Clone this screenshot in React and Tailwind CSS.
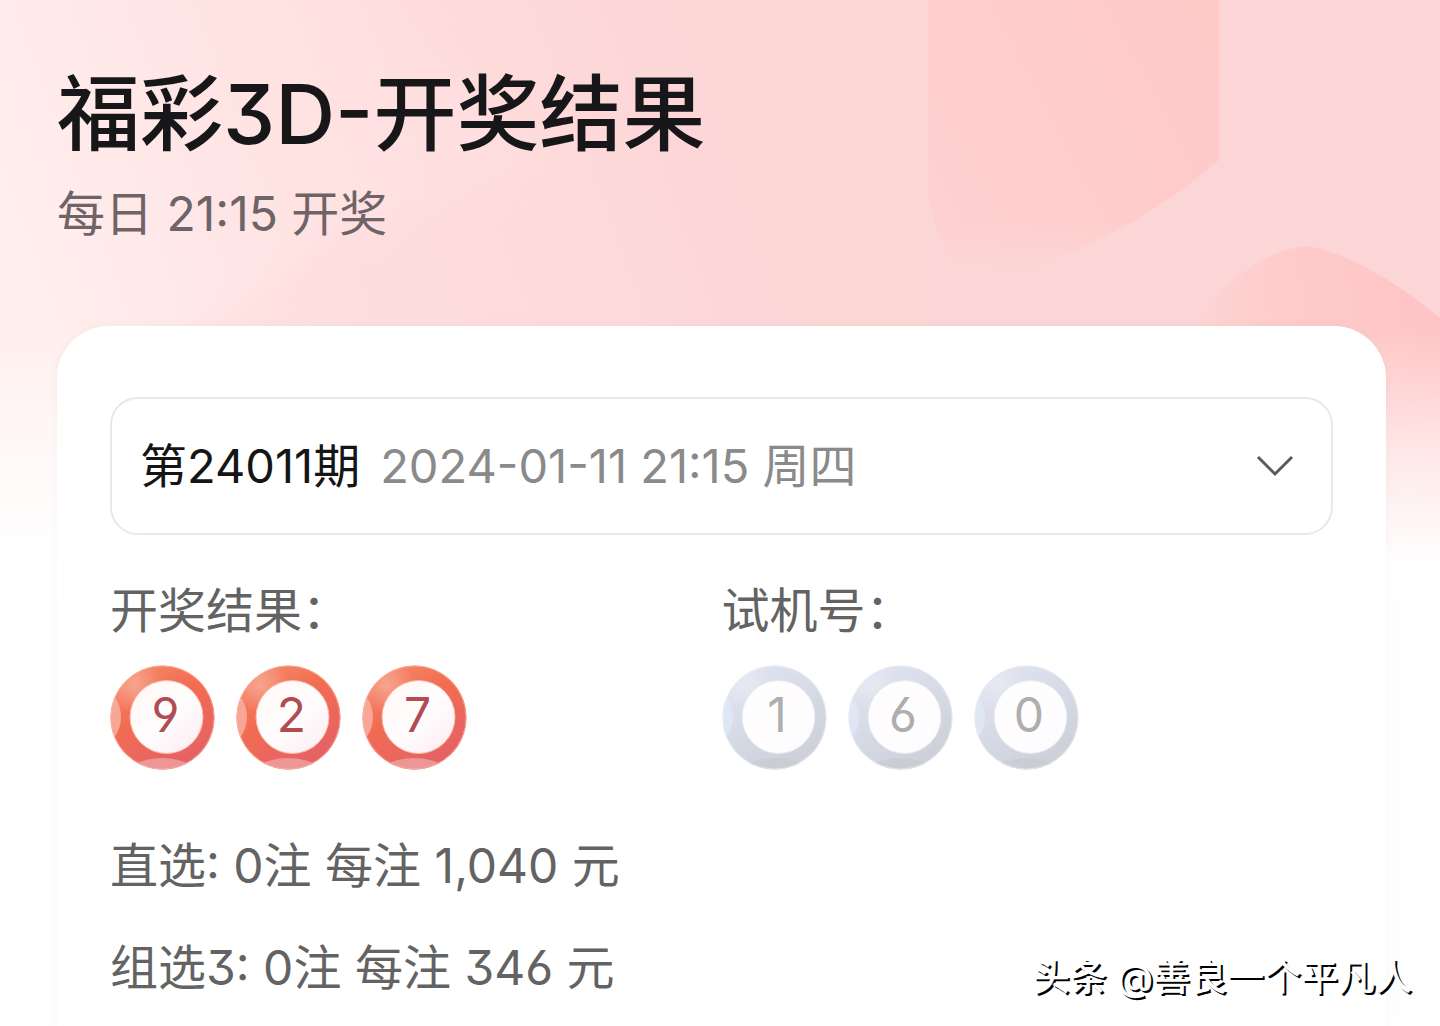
import { useId } from "react";

const DRAWS = [
  {
    issue: "第24011期",
    time: "2024-01-11 21:15 周四",
    result: [9, 2, 7],
    trial: [1, 6, 0],
    prizes: ["直选: 0注 每注 1,040 元", "组选3: 0注 每注 346 元"],
  },
];

function Backdrop() {
  return (
    <svg
      className="absolute inset-x-0 top-0 -z-10 h-[600px] w-full"
      viewBox="0 0 1440 600"
      preserveAspectRatio="none"
      aria-hidden="true"
    >
      <defs>
        <linearGradient id="base" gradientUnits="userSpaceOnUse" x1="0" y1="260" x2="700" y2="0">
          <stop offset="0" stopColor="#ffefee" />
          <stop offset="0.4" stopColor="#ffe3e3" />
          <stop offset="1" stopColor="#fed8d8" />
        </linearGradient>
        <linearGradient id="facet" gradientUnits="userSpaceOnUse" x1="920" y1="200" x2="1220" y2="40">
          <stop offset="0" stopColor="#fed0d1" />
          <stop offset="1" stopColor="#ffc9c8" />
        </linearGradient>
        <linearGradient id="facetTip" x1="0" y1="0" x2="0" y2="1">
          <stop offset="0.65" stopColor="#fff" />
          <stop offset="0.8" stopColor="#000" />
        </linearGradient>
        <mask id="tip" maskUnits="userSpaceOnUse" x="900" y="0" width="340" height="342">
          <rect x="900" width="340" height="342" fill="url(#facetTip)" />
        </mask>
        <linearGradient id="corner" gradientUnits="userSpaceOnUse" x1="1200" y1="330" x2="1420" y2="300">
          <stop offset="0" stopColor="#fcd4d4" />
          <stop offset="0.4" stopColor="#ffcbcb" />
          <stop offset="1" stopColor="#ffc5c6" />
        </linearGradient>
        <linearGradient id="fade" x1="0" y1="0" x2="0" y2="1">
          <stop offset="0.55" stopColor="#fff" stopOpacity="0" />
          <stop offset="0.76" stopColor="#fff" stopOpacity="0.6" />
          <stop offset="0.94" stopColor="#fff" stopOpacity="1" />
        </linearGradient>
        <filter id="soft" x="-20%" y="-20%" width="140%" height="140%">
          <feGaussianBlur stdDeviation="14" />
        </filter>
      </defs>
      <rect width="1440" height="600" fill="url(#base)" />
      <path
        d="M370 -40H960V400H90L330 240L560 160Q450 90 370 -40Z"
        fill="#fdd2d4"
        opacity="0.25"
        filter="url(#soft)"
      />
      <rect x="928" width="512" height="600" fill="#fcd6d6" />
      <path
        d="M928 0H1219V160Q1150 220 1060 258Q1000 280 978 310Q960 280 950 255Q928 215 928 190Z"
        fill="url(#facet)"
        mask="url(#tip)"
      />
      <path d="M1180 345Q1240 250 1310 246Q1370 260 1440 318V600H1180Z" fill="url(#corner)" />
      <rect width="1440" height="600" fill="url(#fade)" />
    </svg>
  );
}

function Ball({ number, red }) {
  const id = useId();

  return (
    <li className="relative flex size-[105px] items-center justify-center">
      <svg className="absolute inset-0 size-full" viewBox="0 0 105 105" aria-hidden="true">
        <defs>
          <linearGradient id={`${id}body`} x1="0.2" y1="0" x2="0.8" y2="1">
            <stop offset="0" stopColor={red ? "#f58a6a" : "#e0e3f0"} />
            <stop offset="0.4" stopColor={red ? "#f26c52" : "#d8dce8"} />
            <stop offset="1" stopColor={red ? "#e26068" : "#cbced6"} />
          </linearGradient>
          <radialGradient id={`${id}shine`} cx="0.24" cy="0.2" r="0.26">
            <stop offset="0" stopColor="#fff" stopOpacity="0.3" />
            <stop offset="1" stopColor="#fff" stopOpacity="0" />
          </radialGradient>
          <linearGradient id={`${id}face`} x1="0" y1="0" x2="1" y2="1">
            <stop offset="0" stopColor={red ? "#fff6f3" : "#fdfdff"} />
            <stop offset="0.5" stopColor="#fffdfe" />
            <stop offset="1" stopColor={red ? "#fdebf1" : "#fbfcff"} />
          </linearGradient>
          <clipPath id={`${id}clip`}>
            <circle cx="52.5" cy="52.5" r="52" />
          </clipPath>
        </defs>
        <g clipPath={`url(#${id}clip)`}>
          <circle cx="52.5" cy="52.5" r="52.5" fill={`url(#${id}body)`} />
          <circle cx="52.5" cy="52.5" r="52.5" fill={`url(#${id}shine)`} />
          <ellipse cx="-12" cy="52" rx="23" ry="29" fill={red ? "#f8b3a6" : "#dfe8f6"} opacity="0.8" />
          <ellipse cx="52" cy="118" rx="42" ry="25" fill={red ? "#eda3a4" : "#c8ccd2"} opacity="0.8" />
        </g>
        <circle cx="52.5" cy="52.5" r="51.5" fill="none" stroke={red ? "#ffb59c" : "#eceef6"} opacity="0.7" />
        <circle cx="56.5" cy="52" r="36.5" fill={`url(#${id}face)`} stroke={red ? "#fbb8a4" : "#e6e8f1"} />
      </svg>
      <span className={red ? "relative pb-1.5 pl-1.5 text-[#b14c53]" : "relative pb-1.5 pl-1.5 text-[#aeaeae]"}>
        {number}
      </span>
    </li>
  );
}

function BallGroup({ title, numbers, red }) {
  return (
    <section>
      <h2>{title}</h2>
      <ul className="mt-6 flex gap-[21px]">
        {numbers.map((n, i) => (
          <Ball key={i} number={n} red={red} />
        ))}
      </ul>
    </section>
  );
}

export default function App() {
  const draw = DRAWS[0];

  return (
    <main className="relative isolate flex min-h-screen flex-col overflow-hidden bg-[#fefefe] pt-16 pr-[54px] pl-[57px] font-['Inter','Noto_Sans_CJK_SC',sans-serif] text-5xl leading-[60px] text-[#636363] [font-feature-settings:'cv03','cv04','cv09']">
      <Backdrop />

      <header className="pb-[82px]">
        <h1 className="text-[83px] leading-[100px] font-medium text-[#17171a]">福彩3D-开奖结果</h1>
        <p className="mt-5 text-[#6e6366]">每日 21:15 开奖</p>
      </header>

      <div className="flex-1 rounded-t-[52px] bg-white px-[53px] pt-[71px] shadow-[0_0_12px_rgba(0,0,0,0.03)]">
        {/* issue picker */}
        <div className="relative flex h-[138px] items-center gap-5 rounded-[28px] border-2 border-[#e8e8e8] pr-9 pl-7 text-[47px]">
          <label htmlFor="issue" className="text-[#151515]">
            {draw.issue}
          </label>
          <select
            id="issue"
            className="h-full min-w-0 flex-1 appearance-none bg-transparent text-[#8a8a8a] outline-none"
          >
            {DRAWS.map((d) => (
              <option key={d.issue}>{d.time}</option>
            ))}
          </select>
          <svg className="pointer-events-none h-6 w-10" viewBox="0 0 40 24" fill="none" aria-hidden="true">
            <path d="M3 3L20 20L37 3" stroke="#5a5a5a" strokeWidth="3" />
          </svg>
        </div>

        <div className="mt-[46px] grid grid-cols-2">
          <BallGroup title="开奖结果：" numbers={draw.result} red />
          <BallGroup title="试机号：" numbers={draw.trial} />
        </div>

        <div className="mt-[66px] flex flex-col gap-[42px]">
          {draw.prizes.map((p) => (
            <p key={p}>{p}</p>
          ))}
        </div>
      </div>

      <p className="absolute right-7 bottom-6 text-[37px] leading-[48px] font-medium text-white [text-shadow:2px_2px_0_#000]">
        头条 @善良一个平凡人
      </p>
    </main>
  );
}
